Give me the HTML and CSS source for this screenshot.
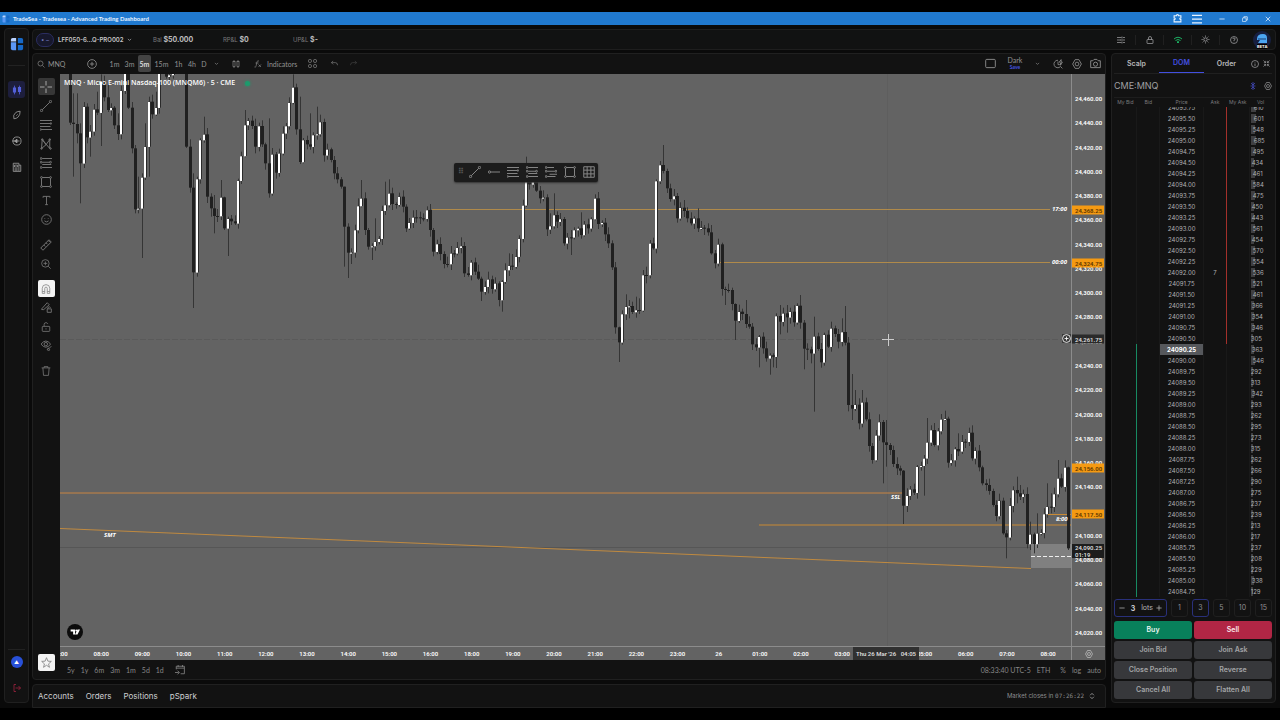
FILE: index.html
```html
<!DOCTYPE html>
<html lang="en">
<head>
<meta charset="utf-8">
<title>TradeSea - Advanced Trading Dashboard</title>
<link rel="stylesheet" href="styles.css">
</head>
<body>
<svg class="defs" aria-hidden="true">
  <symbol id="search" viewBox="0 0 16 16"><circle cx="7" cy="7" r="5"/><path d="M11 11l4 4"/></symbol>
  <symbol id="plusc" viewBox="0 0 16 16"><circle cx="8" cy="8" r="7"/><path d="M8 4.500v7M4.500 8h7"/></symbol>
  <symbol id="chev" viewBox="0 0 16 16"><path d="M3 6l5 5 5-5"/></symbol>
  <symbol id="bars" viewBox="0 0 16 16"><rect x="2" y="3" width="4" height="10"/><rect x="10" y="3" width="4" height="10"/><path d="M4 0v3M4 13v3M12 0v3M12 13v3"/></symbol>
  <symbol id="fx" viewBox="0 0 16 16"><path d="M1 14c3 1 3-1 4-6s1-7 5-6M3 6h6M9 9l5 5M14 9l-5 5"/></symbol>
  <symbol id="grid4" viewBox="0 0 16 16"><rect x="1" y="1" width="5" height="5" rx="1.500"/><rect x="10" y="1" width="5" height="5" rx="1.500"/><rect x="1" y="10" width="5" height="5" rx="1.500"/><rect x="10" y="10" width="5" height="5" rx="1.500"/></symbol>
  <symbol id="undo" viewBox="0 0 16 16"><path d="M5 2L1 6l4 4M1 6h9q5 0 5 6"/></symbol>
  <symbol id="redo" viewBox="0 0 16 16"><path d="M11 2l4 4-4 4M15 6H6q-5 0-5 6"/></symbol>
  <symbol id="square" viewBox="0 0 16 16"><rect x="1" y="2" width="14" height="12" rx="1.500"/></symbol>
  <symbol id="replay" viewBox="0 0 16 16"><path d="M8 2a6 6 0 1 0 4 10l3 3M8 4v5h3M10 5l3-4v4h2l-3 5V6z"/></symbol>
  <symbol id="gear" viewBox="0 0 16 16"><path d="M5 1h6l4 7-4 7H5L1 8z"/><circle cx="8" cy="8" r="3"/></symbol>
  <symbol id="camera" viewBox="0 0 16 16"><path d="M1 4h3l2-2h4l2 2h3v10H1z"/><circle cx="8" cy="9" r="3"/></symbol>
  <symbol id="cross" viewBox="0 0 16 16"><path d="M8 0v6M8 10v6M0 8h6M10 8h6"/></symbol>
  <symbol id="trend" viewBox="0 0 16 16"><circle cx="2" cy="14" r="1.500"/><circle cx="14" cy="2" r="1.500"/><path d="M3 13L13 3"/></symbol>
  <symbol id="fib" viewBox="0 0 16 16"><path d="M0 2h16M0 6h14M0 10h14M2 14h14"/><circle cx="14.500" cy="6" r="1"/><circle cx="1" cy="14" r="1"/></symbol>
  <symbol id="pattern" viewBox="0 0 16 16"><path d="M2 14L3 2l10 12M3 2l5 7 5-7M2 14l6-5M13 2v12"/><circle cx="3" cy="2" r="1"/><circle cx="13" cy="2" r="1"/><circle cx="2" cy="14" r="1"/><circle cx="14" cy="14" r="1"/></symbol>
  <symbol id="position" viewBox="0 0 16 16"><path d="M3 2h13M3 7h10M3 10h12M3 14h13"/><circle cx="1.500" cy="2" r="1.200"/><circle cx="1.500" cy="7" r="1.200"/><circle cx="14" cy="7" r="1.200"/><circle cx="1.500" cy="14" r="1.200"/></symbol>
  <symbol id="position2" viewBox="0 0 16 16"><path d="M3 2h9M3 7h10M3 14h11M6 11h10"/><circle cx="1.500" cy="2" r="1.200"/><circle cx="1.500" cy="7" r="1.200"/><circle cx="14.500" cy="7" r="1.200"/><circle cx="1.500" cy="14" r="1.200"/></symbol>
  <symbol id="rect" viewBox="0 0 16 16"><path d="M2 3v10M14 3v10M3 2h10M3 14h10"/><circle cx="2" cy="2" r="1.200"/><circle cx="14" cy="2" r="1.200"/><circle cx="2" cy="14" r="1.200"/><circle cx="14" cy="14" r="1.200"/></symbol>
  <symbol id="text" viewBox="0 0 16 16"><path d="M3 4V2h10v2M8 2v12M6 14h4"/></symbol>
  <symbol id="smile" viewBox="0 0 16 16"><circle cx="8" cy="8" r="7"/><path d="M5 10q3 3 6 0M5.500 6v1M10.500 6v1"/></symbol>
  <symbol id="ruler" viewBox="0 0 16 16"><path d="M1 12L12 1l3 3L4 15zM5 8l2 2M8 5l2 2M11 2l2 2"/></symbol>
  <symbol id="zoomin" viewBox="0 0 16 16"><circle cx="7" cy="7" r="6"/><path d="M11.500 11.500l4 4M7 4v6M4 7h6"/></symbol>
  <symbol id="magnet" viewBox="0 0 16 16"><path d="M2 15V7a6 6 0 0 1 12 0v8h-4V7a2 2 0 0 0-4 0v8zM2 12h4M10 12h4"/></symbol>
  <symbol id="penlock" viewBox="0 0 16 16"><path d="M1 10L9 1l3 3-8 7H1zM9 10h6v5H9zM10 10V8q2-2 4 0"/></symbol>
  <symbol id="unlock" viewBox="0 0 16 16"><rect x="2" y="7" width="12" height="8" rx="1"/><path d="M5 7V4q0-3 3-3 2 0 3 2M8 10v2"/></symbol>
  <symbol id="lock" viewBox="0 0 16 16"><rect x="2" y="7" width="12" height="8" rx="1"/><path d="M5 7V4q0-3 3-3t3 3v3"/></symbol>
  <symbol id="eye" viewBox="0 0 16 16"><path d="M0 6q7-9 14 0-7 9-14 0zM9 14q1-3 3-2l3-3"/><circle cx="7" cy="6" r="2.500"/><circle cx="11" cy="14" r="1.500"/></symbol>
  <symbol id="trash" viewBox="0 0 16 16"><path d="M1 3h14M5 3V1h6v2M3 3l1 12h8l1-12"/></symbol>
  <symbol id="star" viewBox="0 0 16 16"><path d="M8 1l2 5 5 .4-4 3.600 1.300 5L8 12l-4.300 3L5 10 1 6.400 6 6z"/></symbol>
  <symbol id="leaf" viewBox="0 0 16 16"><path d="M3 14Q1 8 6 4q3-2 7-2 0 6-3 9-3 3-7 3zM7 9l2-2"/></symbol>
  <symbol id="backc" viewBox="0 0 16 16"><circle cx="8" cy="8" r="6.500"/><path d="M0 8h12"/><path fill="currentColor" d="M8 5L4 8l4 3z"/></symbol>
  <symbol id="news" viewBox="0 0 16 16"><path d="M2 2h9v13H2zM11 5h3v10h-3M4 5h5v3H4zM4 11h5M4 13h5"/></symbol>
  <symbol id="logout" viewBox="0 0 16 16"><path d="M6 1H2v14h4M5 8h10M11 4l4 4-4 4"/></symbol>
  <symbol id="sliders" viewBox="0 0 16 16"><path d="M0 3h9M12 3h4M10 1v4M0 8h4M7 8h9M6 6v4M0 13h9M12 13h4M10 11v4"/></symbol>
  <symbol id="wifi" viewBox="0 0 16 16"><path d="M0 6q8-7 16 0M3 9q5-4 10 0M6 12q2-2 4 0L8 14z"/></symbol>
  <symbol id="sun" viewBox="0 0 16 16"><circle cx="8" cy="8" r="3"/><path d="M8 1v2M8 13v2M1 8h2M13 8h2M3 3l1.500 1.500M11.500 11.500L13 13M3 13l1.500-1.500M11.500 4.500L13 3"/></symbol>
  <symbol id="help" viewBox="0 0 16 16"><circle cx="8" cy="8" r="7"/><path d="M5.500 6q0-2 2.500-2t2.500 2Q10.500 7.500 8 8v2M8 11.500v1"/></symbol>
  <symbol id="info" viewBox="0 0 16 16"><circle cx="8" cy="8" r="7"/><path d="M8 7v5M8 4v1"/></symbol>
  <symbol id="collapse" viewBox="0 0 16 16"><path d="M1 1l5 5M2 6h4V2M15 1l-5 5M14 6h-4V2M1 15l5-5M2 10h4v4M15 15l-5-5M14 10h-4v4"/></symbol>
  <symbol id="center" viewBox="0 0 16 16"><path d="M8 0v16M4 2l4 4 4-4M4 14l4-4 4 4M3 8h10"/></symbol>
  <symbol id="puzzle" viewBox="0 0 16 16"><path d="M2 3h4q0-2 2-2t2 2h4v4q-2 0-2 1.500T14 10v4H2v-4q2 0 2-1.500T2 7z"/></symbol>
  <symbol id="menu" viewBox="0 0 16 16"><path d="M0 2h16M0 8h16M0 14h16"/></symbol>
  <symbol id="min" viewBox="0 0 16 16"><path d="M1 8h14"/></symbol>
  <symbol id="restore" viewBox="0 0 16 16"><rect x="1" y="5" width="10" height="10" rx="2"/><path d="M5 5V2h9v9h-3"/></symbol>
  <symbol id="close" viewBox="0 0 16 16"><path d="M2 2l12 12M14 2L2 14"/></symbol>
  <symbol id="hray" viewBox="0 0 16 16"><circle cx="2" cy="8" r="1.500"/><path d="M4 8h12"/></symbol>
  <symbol id="table" viewBox="0 0 16 16"><path d="M1 1h14v14H1zM1 5.500h14M1 10.500h14M5.500 1v14M10.500 1v14"/></symbol>
  <symbol id="goto" viewBox="0 0 16 16"><path d="M2 7V2h13v12H9M2 5h13M5 0v3M12 0v3M0 12h6M4 9l3 3-3 3"/></symbol>
  <symbol id="updown" viewBox="0 0 16 16"><path d="M3 6l5-5 5 5M3 10l5 5 5-5"/></symbol>
  <symbol id="minus" viewBox="0 0 16 16"><path d="M1 8h14"/></symbol>
  <symbol id="plus" viewBox="0 0 16 16"><path d="M1 8h14M8 1v14"/></symbol>
  <symbol id="logo" viewBox="0 0 16 16"><path fill="#b8d2ff" stroke="none" d="M3 1h4v4H1V3q0-2 2-2z"/><path fill="#5b97f5" stroke="none" d="M1 6h6v9H3q-2 0-2-2z"/><path fill="#1668c7" stroke="none" d="M9 1h4q2 0 2 2v4H9zM9 9h6v4q0 2-2 2H9z"/></symbol>
</svg>

<header class="titlebar">
  <svg class="ic ic8"><use href="#logo"/></svg>
  <span class="title">TradeSea - Tradesea - Advanced Trading Dashboard</span>
  <button class="wbtn" aria-label="Extensions"><svg class="ic ic9 bold"><use href="#puzzle"/></svg></button>
  <button class="wbtn" aria-label="Menu"><svg class="ic ic10 bold"><use href="#menu"/></svg></button>
  <button class="wbtn wide" aria-label="Minimize"><svg class="ic ic6 bold"><use href="#min"/></svg></button>
  <button class="wbtn wide" aria-label="Restore"><svg class="ic ic6 bold"><use href="#restore"/></svg></button>
  <button class="wbtn wide" aria-label="Close"><svg class="ic ic6 bold"><use href="#close"/></svg></button>
</header>

<div class="app">
  <nav class="sidebar">
    <svg class="ic ic14 logo"><use href="#logo"/></svg>
    <hr>
    <button class="nav on" aria-label="Chart"><svg class="ic ic10 candles" viewBox="0 0 16 16"><path d="M4 1v14M12 1v14"/><path class="fat" d="M4 4v8M12 3v8"/></svg></button>
    <button class="nav" aria-label="Explore"><svg class="ic ic10"><use href="#leaf"/></svg></button>
    <button class="nav" aria-label="Replay"><svg class="ic ic10"><use href="#backc"/></svg></button>
    <button class="nav" aria-label="News"><svg class="ic ic10"><use href="#news"/></svg></button>
    <span class="grow"></span>
    <hr>
    <button class="avatar" aria-label="Assistant">▲</button>
    <button class="nav exit" aria-label="Log out"><svg class="ic ic8"><use href="#logout"/></svg></button>
  </nav>

  <div class="content">
    <div class="accountbar">
      <span class="badge">• –</span>
      <button class="account">LFF050-6...Q-PRO002 <svg class="ic ic5"><use href="#chev"/></svg></button>
      <span class="stat">Bal <b>$50.000</b></span>
      <span class="stat">RP&amp;L <b>$0</b></span>
      <span class="stat">UP&amp;L <b>$-</b></span>
      <span class="grow"></span>
      <button class="hbtn" aria-label="Settings"><svg class="ic ic8"><use href="#sliders"/></svg></button>
      <button class="hbtn" aria-label="Lock"><svg class="ic ic8"><use href="#lock"/></svg></button>
      <button class="hbtn green" aria-label="Connection"><svg class="ic ic8 bold"><use href="#wifi"/></svg></button>
      <button class="hbtn" aria-label="Theme"><svg class="ic ic9"><use href="#sun"/></svg></button>
      <button class="hbtn" aria-label="Help"><svg class="ic ic8"><use href="#help"/></svg></button>
      <button class="user" aria-label="Profile"><svg viewBox="0 0 18 18"><circle cx="9" cy="9" r="9" fill="#171f40"/><path fill="#4ba6f2" d="M4 8q0-5 6-5 4 0 4 4v5H5l2-3H4z"/><path stroke="#163a75" d="M5 8h8"/></svg><span>BETA</span></button>
    </div>

    <div class="work">
      <div class="left">
        <section class="panel chartpanel">
          <div class="toolbar">
            <button class="sym"><svg class="ic ic8"><use href="#search"/></svg>MNQ</button>
            <button class="w22" aria-label="Add symbol"><svg class="ic ic10"><use href="#plusc"/></svg></button>
            <div class="frames">
              <button>1m</button><button>3m</button><button class="on">5m</button><button class="w19">15m</button><button>1h</button><button class="w12">4h</button><button class="w12">D</button><button class="w12" aria-label="More"><svg class="ic ic5"><use href="#chev"/></svg></button>
            </div>
            <button class="w28" aria-label="Bar style"><svg class="ic ic8"><use href="#bars"/></svg></button>
            <button class="ind"><svg class="ic ic8"><use href="#fx"/></svg>Indicators</button>
            <button class="w22" aria-label="Layouts"><svg class="ic ic9"><use href="#grid4"/></svg></button>
            <button class="w22" aria-label="Undo"><svg class="ic ic7"><use href="#undo"/></svg></button>
            <button class="w16 faint" aria-label="Redo"><svg class="ic ic7"><use href="#redo"/></svg></button>
            <span class="grow"></span>
            <button class="w28" aria-label="Layout"><svg class="ic ic11"><use href="#square"/></svg></button>
            <button class="theme">Dark<span>Save</span></button>
            <button class="w22" aria-label="Themes"><svg class="ic ic5"><use href="#chev"/></svg></button>
            <button class="w19" aria-label="Replay"><svg class="ic ic10"><use href="#replay"/></svg></button>
            <button class="w19" aria-label="Chart settings"><svg class="ic ic10"><use href="#gear"/></svg></button>
            <button class="w19" aria-label="Snapshot"><svg class="ic ic11"><use href="#camera"/></svg></button>
          </div>
          <div class="mid">
            <div class="tools">
              <button class="on" aria-label="Cross"><svg class="ic ic12"><use href="#cross"/></svg></button>
              <button aria-label="Trend line"><svg class="ic ic12"><use href="#trend"/></svg></button>
              <button aria-label="Fibonacci"><svg class="ic ic12"><use href="#fib"/></svg></button>
              <button aria-label="Patterns"><svg class="ic ic12"><use href="#pattern"/></svg></button>
              <button aria-label="Positions"><svg class="ic ic12"><use href="#position"/></svg></button>
              <button aria-label="Shapes"><svg class="ic ic12"><use href="#rect"/></svg></button>
              <button aria-label="Text"><svg class="ic ic11"><use href="#text"/></svg></button>
              <button aria-label="Icons"><svg class="ic ic11"><use href="#smile"/></svg></button>
              <button class="gap" aria-label="Measure"><svg class="ic ic12"><use href="#ruler"/></svg></button>
              <button aria-label="Zoom"><svg class="ic ic10"><use href="#zoomin"/></svg></button>
              <button class="gap lit" aria-label="Magnet"><svg class="ic ic10"><use href="#magnet"/></svg></button>
              <button aria-label="Keep drawing"><svg class="ic ic11"><use href="#penlock"/></svg></button>
              <button aria-label="Lock drawings"><svg class="ic ic10"><use href="#unlock"/></svg></button>
              <button aria-label="Hide drawings"><svg class="ic ic11"><use href="#eye"/></svg></button>
              <button class="gap" aria-label="Delete"><svg class="ic ic10"><use href="#trash"/></svg></button>
              <span class="grow"></span>
              <button class="lit" aria-label="Favorites"><svg class="ic ic11"><use href="#star"/></svg></button>
            </div>
            <div class="chartcol">
              <div class="chart">
                <div class="plot" id="plot">
                  <svg class="series" id="series" viewBox="60 74 1011 572" preserveAspectRatio="none"></svg>
                  <div class="legend">MNQ · Micro E-mini Nasdaq-100 (MNQM6) · 5 · CME <i></i></div>
                  <div class="floatbar">
                    <span class="grip">⠿</span>
                    <button aria-label="Trend line"><svg class="ic ic12"><use href="#trend"/></svg></button>
                    <button aria-label="Ray"><svg class="ic ic12"><use href="#hray"/></svg></button>
                    <button aria-label="Fibonacci"><svg class="ic ic12"><use href="#fib"/></svg></button>
                    <button aria-label="Long position"><svg class="ic ic12"><use href="#position"/></svg></button>
                    <button aria-label="Short position"><svg class="ic ic12"><use href="#position2"/></svg></button>
                    <button aria-label="Rectangle"><svg class="ic ic12"><use href="#rect"/></svg></button>
                    <button aria-label="Table"><svg class="ic ic12"><use href="#table"/></svg></button>
                  </div>
                  <span class="tv"><svg viewBox="0 0 16 16"><path fill="#fff" d="M1 4h7v8H5V7H1zM12 4h4l-4 8H8z"/><circle cx="10" cy="5.500" r="1.500" fill="#fff"/></svg></span>
                  <svg class="ic ic9 addalert"><use href="#plusc"/></svg>
                </div>
                <div class="paxis" id="paxis"></div>
                <div class="taxis" id="taxis"></div>
                <div class="corner"><svg class="ic ic8"><use href="#gear"/></svg></div>
              </div>
              <div class="ranges">
                <button>5y</button><button>1y</button><button>6m</button><button>3m</button><button>1m</button><button>5d</button><button>1d</button>
                <button class="goto" aria-label="Go to date"><svg class="ic ic10"><use href="#goto"/></svg></button>
                <span class="grow"></span>
                <button>08:33:40 UTC-5</button><button>ETH</button><button class="pct">%</button><button>log</button><button>auto</button>
              </div>
            </div>
          </div>
        </section>
        <section class="panel tabs">
          <button>Accounts</button><button>Orders</button><button>Positions</button><button>pSpark</button>
          <span class="grow"></span>
          <span class="closes">Market closes in <code>07:26:22</code></span>
          <svg class="ic ic6"><use href="#updown"/></svg>
        </section>
      </div>

      <aside class="panel dom">
        <div class="domtabs">
          <button>Scalp</button><button class="on">DOM</button><button>Order</button>
          <span class="dicons"><svg class="ic ic8"><use href="#info"/></svg><svg class="ic ic7"><use href="#collapse"/></svg></span>
        </div>
        <div class="domsym"><span>CME:MNQ</span><svg class="ic ic8 blue"><use href="#center"/></svg><svg class="ic ic8"><use href="#gear"/></svg></div>
        <div class="ladder">
          <table>
            <thead><tr><th>My Bid</th><th>Bid</th><th class="pr">Price</th><th>Ask</th><th>My Ask</th><th>Vol</th></tr></thead>
          </table>
          <div class="rows"><table><tbody id="rows"></tbody></table></div>
        </div>
        <div class="lots">
          <div class="stepper"><button aria-label="Less"><svg class="ic ic6"><use href="#minus"/></svg></button><input id="qty" value="3"><label for="qty">lots</label><button aria-label="More"><svg class="ic ic6"><use href="#plus"/></svg></button></div>
          <button>1</button><button class="on">3</button><button>5</button><button>10</button><button>15</button>
        </div>
        <div class="actions">
          <button class="buy">Buy</button><button class="sell">Sell</button>
          <button>Join Bid</button><button>Join Ask</button>
          <button>Close Position</button><button>Reverse</button>
          <button>Cancel All</button><button>Flatten All</button>
        </div>
      </aside>
    </div>
  </div>
</div>
<script src="chart.js"></script>
</body>
</html>
```
FILE: styles.css
```css
* { box-sizing: border-box; }
body { margin: 0; height: 100vh; padding: 12px 0; background: #000; color: #b4b4b6; font: 7px/10px Inter, sans-serif; display: flex; flex-direction: column; overflow: hidden; }
button { font: inherit; color: inherit; background: none; border: 0; padding: 0; margin: 0; display: flex; align-items: center; justify-content: center; white-space: nowrap; }
.defs { position: absolute; width: 0; height: 0; }
.grow { flex: 1; }
.ic { fill: none; stroke: currentColor; stroke-width: 1.300; flex: none; }
.bold { stroke-width: 2; }
.ic5 { width: 5px; height: 5px; stroke-width: 2; }
.ic6 { width: 6px; height: 6px; stroke-width: 2; }
.ic7 { width: 7px; height: 7px; }
.ic8 { width: 8px; height: 8px; }
.ic9 { width: 9px; height: 9px; }
.ic10 { width: 10px; height: 10px; }
.ic11 { width: 11px; height: 11px; }
.ic12 { width: 12px; height: 12px; }
.ic14 { width: 14px; height: 14px; }

.titlebar { flex: none; height: 13px; background: #2079cf; color: #e8f3ff; display: flex; align-items: center; padding: 0 1px 0 2px; font-family: Lato, sans-serif; font-size: 6px; font-weight: 700; }
.title { flex: 1; margin-left: 3px; }
.wbtn { width: 20px; height: 13px; }
.wbtn.wide { width: 23px; }
.wbtn.wide:nth-of-type(3) { margin-left: 3px; }

.app { flex: 1; min-height: 0; display: flex; gap: 3px; padding: 0 4px; background: #0a0a0a; }
.sidebar { flex: none; width: 25px; margin: 3px 0 5px; background: #121212; border: 1px solid #202020; border-radius: 4px; display: flex; flex-direction: column; align-items: center; padding: 8px 0 6px; }
.sidebar hr { width: 17px; height: 1px; border: 0; background: #222; margin: 0; flex: none; }
.logo { margin-bottom: 14px; }
.nav { flex: none; width: 17px; height: 17px; border-radius: 3px; margin-bottom: 9px; color: #a0a0a0; }
.nav.on { background: #1d1e3d; color: #5360dc; margin-top: 15px; margin-bottom: 8px; }
.fat { stroke-width: 5; }
.avatar { flex: none; width: 12px; height: 12px; border-radius: 50%; background: #2850d8; color: #fff; font-size: 5px; margin: 6px 0 11px; }
.nav.exit { color: #bc2548; margin: 0; }

.content { flex: 1; min-width: 0; display: flex; flex-direction: column; gap: 3px; }
.accountbar { flex: none; height: 21px; margin-top: 4px; background: #111212; border: 1px solid #1e1e1e; border-radius: 4px; display: flex; align-items: center; padding: 0 4px 0 3px; }
.badge { width: 18px; height: 14px; border: 1px solid #2b2d60; border-radius: 7px; background: #17182c; color: #7b82c8; display: flex; align-items: center; justify-content: center; font-size: 6px; }
.account { width: 99px; justify-content: flex-start; gap: 3px; padding-left: 4px; font-size: 6px; font-weight: 600; color: #c6c6c8; }
.stat { width: 70px; color: #79797b; font-size: 6px; }
.stat b { color: #bcbcbe; font-size: 7px; }
.hbtn { width: 28px; height: 10px; }
.hbtn + .hbtn { border-left: 1px solid #202020; }
.green { color: #1cae61; }
.user { position: relative; width: 18px; height: 18px; margin-left: 6px; }
.user span { position: absolute; left: 4px; right: 4px; bottom: 0; background: #000; color: #fff; font-size: 4px; font-weight: 700; line-height: 5px; }

.work { flex: 1; min-height: 0; display: flex; gap: 5px; }
.left { flex: 1; min-width: 0; display: flex; flex-direction: column; gap: 4px; }
.panel { background: #121212; border: 1px solid #202020; border-radius: 4px; }
.chartpanel { flex: 1; min-height: 0; display: flex; flex-direction: column; }
.toolbar { flex: none; height: 20px; padding: 0 0 1px 4px; display: flex; align-items: center; font-family: Lato, sans-serif; color: #929292; }
.sym { width: 44px; gap: 3px; justify-content: flex-start; }
.frames { display: flex; padding-left: 4px; }
.frames button { width: 15px; height: 17px; }
.frames .on { width: 13px; margin: 0 1px; background: #444; color: #ddd; border-radius: 2px; font-weight: 700; }
.w12, .frames .w12 { width: 12px; }
.w16 { width: 16px; }
.w19, .frames .w19 { width: 19px; }
.w22 { width: 22px; }
.w28 { width: 28px; }
.ind { gap: 5px; padding: 0 4px; }
.faint { color: #4c4c4c; }
.theme { width: 22px; flex-direction: column; line-height: 7px; }
.theme span { color: #4354e0; font-size: 5px; line-height: 6px; font-weight: 700; }

.mid { flex: 1; min-height: 0; display: flex; }
.tools { flex: none; width: 27px; display: flex; flex-direction: column; align-items: center; gap: 2px; padding: 4px 1px 8px 0; color: #777; }
.tools button { flex: none; width: 17px; height: 17px; border-radius: 2px; }
.tools .on { background: #373737; color: #aaa; }
.tools .lit { background: #f4f4f4; color: #888; }
.tools .gap { margin-top: 6px; }

.chartcol { flex: 1; min-width: 0; display: flex; flex-direction: column; }
.chart { flex: 1; min-height: 0; display: grid; grid-template: minmax(0, 1fr) 14px / minmax(0, 1fr) 34px; background: #636363; color: #fff; font-family: Roboto, sans-serif; font-size: 6px; font-weight: 600; }
.plot { position: relative; overflow: hidden; }
.series { position: absolute; inset: 0; width: 100%; height: 100%; }
.legend { position: absolute; left: 4px; top: 4px; font: 600 7px/10px "Open Sans", sans-serif; display: flex; align-items: center; gap: 10px; }
.legend i { width: 5px; height: 5px; border-radius: 50%; background: #1d9a6c; box-shadow: 0 0 3px #1d9a6c; }
.floatbar { position: absolute; left: 39%; top: 15.500%; height: 19px; display: flex; align-items: center; gap: 3px; background: #1c1c1c; border-radius: 2px; color: #888; padding: 0 1px 0 4px; box-shadow: 0 1px 2px #333; }
.floatbar button { width: 16px; height: 16px; }
.grip { width: 6px; color: #555; font-size: 8px; }
.tv { position: absolute; left: 7px; bottom: 6px; width: 16px; height: 16px; border-radius: 50%; background: #0c0c0c; padding: 3px; display: flex; }
.addalert { position: absolute; right: 0; top: 45.500%; background: #3b3b3b; stroke-width: 1.500; }
.note { position: absolute; font: italic 700 6px/8px "Open Sans", sans-serif; color: #fff; transform: translateY(-50%); }
.paxis { position: relative; overflow: hidden; border-left: 1px solid #8c8c8c; }
.paxis span { position: absolute; left: 0; right: 1px; padding-left: 3px; line-height: 9px; transform: translateY(-50%); }
.paxis .tag { background: #f59a12; color: #5e3600; }
.paxis .dark { background: #2a2a2a; color: #ddd; }
.paxis .now { background: #1d1d1d; line-height: 7px; }
.taxis { position: relative; overflow: hidden; border-top: 1px solid #8c8c8c; }
.taxis span { position: absolute; top: 1px; line-height: 11px; transform: translateX(-50%); white-space: nowrap; }
.taxis .dark { top: 0; line-height: 13px; background: #303030; color: #ddd; padding: 0 3px; white-space: pre; }
.corner { border-top: 1px solid #8c8c8c; border-left: 1px solid #8c8c8c; display: flex; align-items: center; justify-content: center; color: #ccc; }
.ranges { flex: none; height: 19px; display: flex; align-items: center; padding: 0 4px 0 7px; gap: 6px; color: #868686; font-family: Lato, sans-serif; }
.goto { margin-left: 5px; }
.pct { margin-left: 4px; }

.tabs { flex: none; height: 24px; display: flex; align-items: center; gap: 12px; padding: 0 10px 0 5px; font-size: 8px; border-radius: 4px 4px 0 0; }
.tabs button { color: #cfcfd1; }
.closes { font-size: 6px; color: #8d8d8f; }
.closes code { font: 6px "DejaVu Sans Mono", monospace; }
.tabs .closes + svg { margin-left: -7px; }

.dom { flex: none; width: 165px; margin-bottom: 5px; padding: 0 3px 3px 2px; display: flex; flex-direction: column; }
.domtabs { flex: none; height: 20px; display: flex; border-bottom: 1px solid #202020; font-weight: 600; }
.domtabs button { width: 45px; color: #b9b9bb; }
.domtabs .on { color: #424fe0; border-bottom: 1px solid #424fe0; }
.dicons { flex: 1; display: flex; align-items: center; justify-content: center; gap: 4px; }
.domsym { flex: none; height: 23px; display: flex; align-items: center; gap: 7px; font-size: 9px; color: #a0a0a2; }
.domsym span { flex: 1; }
.blue { color: #4b55dc; }
.ladder { flex: 1; min-height: 0; display: flex; flex-direction: column; }
.ladder table { width: 100%; table-layout: fixed; border-collapse: collapse; text-align: center; font-size: 6px; }
.ladder th { height: 9px; padding: 0; font-weight: 400; font-size: 5px; line-height: 8px; color: #7a7a7c; border-top: 1px solid #1d1d1d; white-space: nowrap; }
.ladder .pr { width: 44px; }
.rows { flex: 1; min-height: 0; overflow: hidden; display: flex; flex-direction: column; justify-content: flex-end; }
.rows td { height: 11px; padding: 0; line-height: 10px; color: #b0b0b2; border-right: 1px solid #191919; }
.rows td.vol { text-align: left; padding-left: 1px; border-right: 0; }
.vol i { display: inline-block; height: 9px; background: #3f3f41; vertical-align: middle; margin-right: -2px; }
.rows .ask { border-right-color: #a3302b; }
.rows .bid { border-right-color: #178a62; }
.rows .last { background: #56585c; color: #fff; font-weight: 700; }
.lots { flex: none; height: 18px; margin: 2px 0 4px; display: flex; gap: 4px; }
.lots > button { flex: 1; border: 1px solid #1f1f1f; border-radius: 3px; color: #909092; }
.lots > .on { border-color: #29307a; }
.stepper { width: 53px; border: 1px solid #29307a; border-radius: 3px; display: flex; align-items: center; justify-content: space-between; padding: 0 4px; }
.stepper input { width: 10px; border: 0; padding: 0; background: none; color: #d0d0d2; font: 700 7px Inter, sans-serif; text-align: center; outline: 0; }
.actions { flex: none; display: grid; grid-template-columns: 1fr 1fr; gap: 2px; font-weight: 600; color: #a3a4a6; }
.actions button { height: 18px; border-radius: 3px; background: #37383b; }
.actions .buy { background: #08805b; color: #e8f5f0; }
.actions .sell { background: #b12645; color: #fbe6ea; }
```
FILE: chart.js
```js
// Candles: close [, high [, low]] in thirds of a pixel; each opens at the previous close.
const candles = `368,150,375 372,280,530 400,280,430 490,370,610 320 412,310,430 394,375,470 328 338,275,345 245,223,438 292 330,250 323 376,318 402,340,420 272 200 323 445 628,435,640
625,530,640 532,520,774 440,370 305,290,530 343 323,275,348 200 190 230 225 200 170 160 200 440 563 817,520,924 537,530,830 420 403,350 590 625,580,650 648,585,700 648 592,540 685,590,690 656,650,768 664 670 542
468 375,330 362 378 440 378 433 490 580,355 463 518 460 400 378 308 262,223 388 486,290,492 420 433 440,340 405 402,320 366 466 448 480 520 538 560 680,560,800 758,670,834 757,745,792 690 618 595,540 690 740 738,730,780 725,655
716 632 615,545 580,538 612 614 590 620 685 668 652 652,630,668 655,635,672 656,640,664 630 690 755 732 762 792 792,770,802 760 760 743 738,712 820 825 787 815 836 875,830,903 860 838 867 850 900
845,840,935 810 797,760 800,762,810 770 716 616 540,470 553 545 572 595 592 688 678,640 645,580 665 657 730 712 712,690,765 690 685,680,710 705,637 673 685 657 595 672 668 703 730 802 982 1027,980,1086 942 920,883 918,900,955 936
930,890 931,895 825 825,800,850 730 745 543 495 513,435,520 565 597 588 655 623 633 655 670 655 685,625 683 685,675,705 697 760 790 733 867 870,860,915 870 912 962,910,1020 935 942 972,900 980 1033 1042 1010,1005,1102 1045 1075
1066,1060,1124 1070,1060,1102 948,940,1104 965,915,1003 940 952,915,998 935 967 917 968,885 1046,960,1108 1048,1030,1080 1060,1040,1090 1009,950,1235 1047 1087 1004 1040 985 1002 1025 996,955 1028,918 1215 1226,1122,1260 1214,1170 1270 1207,1170 1258 1338 1380 1306 1266 1327,1260,1450 1335,1260,1400
1350 1392 1405 1412 1517,1410,1572 1487 1468 1478 1400 1397 1375,1365,1487 1327,1254 1290 1335 1293 1258 1256,1232 1388,1250 1380 1347 1354,1300 1325 1325 1298 1375 1352 1402 1450 1455 1473 1515 1548 1502 1600 1612,1590,1675 1517 1470 1480,1430,1510
1490,1455,1500 1482 1632 1603,1565,1650 1632,1598,1660 1600,1540 1598 1542 1520,1450 1520,1480,1540 1482 1435,1380 1460 1402 1645,1400,1650`.split(/\s+/).map(s => s.split(',').map(Number));

const right = 1068, step = 1029 / 300;
let open = 150, shapes = '';
candles.forEach(([close, hi, lo], i) => {
  const x = Math.round(right - (candles.length - 1 - i) * step);
  const top = Math.min(open, close), bottom = Math.max(open, close);
  const high = (hi || top - 5 - (i * 7) % 19) / 3, low = (lo || bottom + 4 + (i * 11) % 17) / 3;
  const h = Math.max(1, (bottom - top) / 3), y = top / 3;
  shapes += `<path d="M${x + .5} ${high}V${low}" stroke="#353535"/>`;
  shapes += close < open
    ? `<rect x="${x - 1}" y="${y}" width="3" height="${h}" fill="#2a2a2a"/><rect x="${x - 1}" y="${y + .3}" width="2" height="${h}" fill="#fff"/>`
    : `<rect x="${x - 1}" y="${y}" width="3" height="${h}" fill="#202020"/>`;
  open = close;
});
const line = (x1, y1, x2, y2, c, extra = '') => `<path d="M${x1} ${y1}L${x2} ${y2}" stroke="${c}" ${extra}/>`;
document.getElementById('series').innerHTML =
  line(60, 339.5, 1071, 339.5, '#5a5a5a', 'stroke-dasharray="6 2"') +
  line(887.5, 74, 887.5, 646, '#5e5e5e') +
  line(60, 547.5, 1071, 547.5, '#565656') +
  '<rect x="1031" y="544" width="40" height="24" fill="#808080"/>' +
  line(432, 209.5, 1050, 209.5, '#b08a4a') +
  line(720, 262.5, 1050, 262.5, '#b08a4a') +
  line(60, 493, 902, 493, '#c98543') +
  line(759, 525, 1071, 525, '#c98a35') +
  line(1048, 514.5, 1071, 514.5, '#c98a35') +
  line(60, 528.5, 1031, 568.5, '#c08a40') +
  shapes +
  line(1031, 556.5, 1071, 556.5, '#eee', 'stroke-dasharray="4 2"') +
  line(882, 339.5, 894, 339.5, '#ccc') + line(888.5, 334, 888.5, 346, '#ccc');

const pctY = y => (y - 74) / 572 * 100, pctX = x => (x - 60) / 1011 * 100;
const plot = document.getElementById('plot');
[['17:00', 1052, 209], ['00:00', 1052, 262], ['SSL', 891, 497], ['SMT', 104, 535], ['8:00', 1056, 519]].forEach(([t, x, y]) =>
  plot.insertAdjacentHTML('beforeend', `<span class="note" style="left:${pctX(x)}%;top:${pctY(y)}%">${t}</span>`));

const price = document.getElementById('paxis');
const put = (t, y, c = '') => price.insertAdjacentHTML('beforeend', `<span class="${c}" style="top:${pctY(y)}%">${t}</span>`);
for (let k = 0; k < 23; k++) put(`24,${460 - 20 * k}.00`.replace(/,(\d\d)\./, ',0$1.'), 98 + k * 24.27);
put('24,368.25', 209.5, 'tag');
put('24,324.75', 262.5, 'tag');
put('24,156.00', 467.5, 'tag');
put('24,117.50', 514, 'tag');
put('24,261.75', 339, 'dark');
put('24,090.25<br>01:19', 551, 'dark now');

const time = document.getElementById('taxis');
// The 17:00 hour is the session break; 04:00 sits behind the crosshair label.
['07:00', '08:00', '09:00', '10:00', '11:00', '12:00', '13:00', '14:00', '15:00', '16:00', '18:00', '19:00', '20:00', '21:00', '22:00', '23:00', '26', '01:00', '02:00', '03:00', '', '05:00', '06:00', '07:00', '08:00'].forEach((label, k) => {
  if (label) time.insertAdjacentHTML('beforeend', `<span style="left:${pctX(60 + k * 41.17)}%">${label}</span>`);
});
time.insertAdjacentHTML('beforeend', `<span class="dark" style="left:${pctX(886)}%">Thu 26 Mar '26   04:05</span>`);

const volumes = [610, 601, 548, 685, 495, 434, 461, 584, 475, 450, 443, 561, 454, 570, 554, 536, 521, 461, 366, 354, 346, 305, 363, 546, 292, 313, 342, 293, 262, 295, 273, 315, 262, 266, 290, 275, 237, 239, 213, 217, 237, 208, 229, 338, 129];
document.getElementById('rows').innerHTML = volumes.map((v, i) => {
  const p = (24095.75 - i * .25).toFixed(2);
  return `<tr><td class="${i >= 22 ? 'bid' : ''}"></td><td></td><td class="pr ${i === 22 ? 'last' : ''}">${p}</td><td class="${i < 22 ? 'ask' : ''}">${i === 15 ? 7 : ''}</td><td></td><td class="vol"><i style="width:${Math.max(2, Math.round(v / 130))}px"></i>${v}</td></tr>`;
}).join('');
```
